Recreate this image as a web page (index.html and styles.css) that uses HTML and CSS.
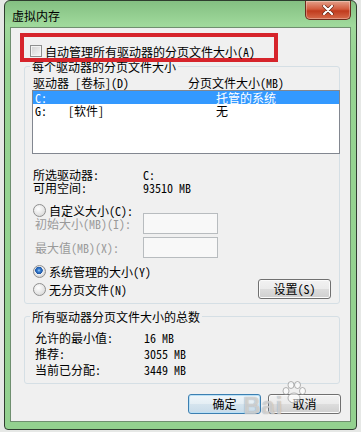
FILE: index.html
```html
<!DOCTYPE html>
<html lang="zh-CN">
  <head>
    <meta charset="UTF-8" />
    <meta name="viewport" content="width=device-width, initial-scale=1.0"/>
    <title>虚拟内存</title>
    <link rel="stylesheet" href="styles.css">
  </head>
  <body>
    <div class="window">
      <div class="titlebar">
        <span class="title">虚拟内存</span>
        <div class="close">
          <svg width="12" height="10" viewBox="0 0 12 10">
            <path d="M2 1 L10 9 M10 1 L2 9" stroke="#5a2416" stroke-width="3.4" stroke-linecap="round"/>
            <path d="M2 1 L10 9 M10 1 L2 9" stroke="#ffffff" stroke-width="2.2" stroke-linecap="round"/>
          </svg>
        </div>
      </div>

      <div class="client">
        <div class="auto-box">
          <span class="check"></span>
          <span>自动管理所有驱动器的分页文件大小(A)</span>
        </div>

        <div class="group">
          <div class="group-title">每个驱动器的分页文件大小</div>
          <div class="cols">
            <span>驱动器 [卷标](D)</span>
            <span>分页文件大小(MB)</span>
          </div>
          <div class="list">
            <div class="list-row selected"><span>C:</span><span></span><span>托管的系统</span></div>
            <div class="list-row"><span>G:</span><span>[软件]</span><span>无</span></div>
          </div>

          <div class="info first"><span>所选驱动器:</span><span>C:</span></div>
          <div class="info"><span>可用空间:</span><span>93510 MB</span></div>

          <div class="opt custom"><span class="radio"></span><span>自定义大小(C):</span></div>
          <div class="field first"><span class="field-label">初始大小(MB)(I):</span><span class="input"></span></div>
          <div class="field"><span class="field-label">最大值(MB)(X):</span><span class="input"></span></div>

          <div class="opt system"><span class="radio on"></span><span>系统管理的大小(Y)</span></div>
          <div class="opt none"><span class="radio"></span><span>无分页文件(N)</span><button type="button" class="btn set">设置(S)</button></div>
        </div>

        <div class="group totals">
          <div class="group-title">所有驱动器分页文件大小的总数</div>
          <div class="sum-row first"><span>允许的最小值:</span><span>16 MB</span></div>
          <div class="sum-row"><span>推荐:</span><span>3055 MB</span></div>
          <div class="sum-row"><span>当前已分配:</span><span>3449 MB</span></div>
        </div>

        <div class="actions">
          <button type="button" class="btn default">确定</button>
          <button type="button" class="btn">取消</button>
        </div>
      </div>

      <span class="watermark">Bai</span>
      <svg class="paw" width="26" height="24" viewBox="0 0 26 24">
        <g fill="rgba(255,255,255,0.6)" stroke="rgba(120,120,120,0.55)" stroke-width="1">
          <ellipse cx="5" cy="10" rx="3" ry="3.5"/>
          <ellipse cx="10" cy="4" rx="3" ry="3.5"/>
          <ellipse cx="16.5" cy="4" rx="3" ry="3.5"/>
          <ellipse cx="21.5" cy="10" rx="3" ry="3.5"/>
          <ellipse cx="13" cy="17" rx="6" ry="5"/>
        </g>
      </svg>
    </div>
  </body>
</html>
```

FILE: styles.css
```css
* {
  box-sizing: border-box;
}

body {
  margin: 0;
  background: #e6e8e6;
  font-family: "Noto Sans Mono CJK SC", "Noto Sans CJK SC", sans-serif;
  font-size: 12px;
  line-height: 13px;
  color: #000;
}

.window {
  position: relative;
  width: 353px;
  height: 430px;
  margin-left: 4px;
  padding: 0 5px 7px;
  border: 1px solid #2f3d2f;
  border-radius: 6px 6px 4px 4px;
  background: linear-gradient(#84bf82, #9fd99b 24px, #96d492 60px, #93d18f);
}

.titlebar {
  display: flex;
  align-items: flex-start;
  height: 26px;
}

.title {
  padding: 8px 0 0 2px;
}

.close {
  display: flex;
  align-items: center;
  justify-content: center;
  width: 46px;
  height: 19px;
  margin-left: auto;
  border: 1px solid #6b2a1c;
  border-top: none;
  border-radius: 0 0 5px 5px;
  background: linear-gradient(#e3a08a, #d25c3e 45%, #c03b1e 55%, #d66a4a);
  box-shadow: inset 0 0 0 1px rgba(255, 255, 255, 0.3);
}

.client {
  height: 395px;
  border: 1px solid #6f8f6f;
  background: #f0f0f0;
}

.auto-box {
  position: relative;
  z-index: 1;
  display: flex;
  align-items: center;
  gap: 3px;
  width: 258px;
  height: 29px;
  margin: 5px 0 0 9px;
  padding: 7px 0 0 6px;
  border: 4px solid #d6242b;
}

.check {
  flex: none;
  width: 12px;
  height: 12px;
  border: 1px solid #8e8f8f;
  background: linear-gradient(135deg, #d2d2d2, #f7f7f7);
  box-shadow: inset 0 0 0 1px #f4f4f4;
}

.group {
  width: 316px;
  margin: 4px 0 0 13px;
  padding: 0 8px 4px;
  border: 1px solid #d5dfe5;
  border-radius: 3px;
}

.group-title {
  width: fit-content;
  margin: -7px 0 0 -3px;
  padding: 0 2px;
  background: #f0f0f0;
}

.cols {
  display: grid;
  grid-template-columns: 155px 1fr;
  margin-top: 3px;
}

.list {
  height: 64px;
  margin: 1px -9px 0 -1px;
  border: 1px solid #828790;
  background: #fff;
}

.list-row {
  display: grid;
  grid-template-columns: 33px 148px 1fr;
  height: 13px;
  padding-left: 2px;
}

.list-row.selected {
  background: #3399ff;
  color: #fff;
}

.info {
  display: grid;
  grid-template-columns: 110px 1fr;
}

.info.first {
  margin-top: 14px;
}

.opt {
  display: flex;
  align-items: center;
  gap: 3px;
  height: 14px;
}

.opt.custom {
  margin-top: 9px;
}

.opt.system {
  margin-top: 6px;
}

.opt.none {
  height: 20px;
  margin-top: 1px;
}

.radio {
  flex: none;
  width: 13px;
  height: 13px;
  border: 1px solid #8f8f8f;
  border-radius: 50%;
  background: radial-gradient(circle at 40% 35%, #fff, #d8d8d8 85%);
}

.radio.on {
  background: radial-gradient(circle at 45% 40%, #a8d4f6 0, #3a7fd0 1.5px, #1d56a6 3.5px, #f2f2f2 4px, #d8d8d8 6px);
}

.field {
  display: flex;
  align-items: center;
  height: 21px;
  margin-top: 3px;
  padding-left: 2px;
  color: #9a9a9a;
}

.field.first {
  margin-top: -4px;
}

.field-label {
  width: 108px;
}

.input {
  width: 75px;
  height: 21px;
  border: 1px solid #b8bcbf;
  background: #f8f8f8;
}

.btn {
  width: 73px;
  height: 20px;
  padding: 0;
  border: 1px solid #707070;
  border-radius: 3px;
  background: linear-gradient(#f2f2f2, #ebebeb 49%, #dddddd 50%, #cfcfcf);
  box-shadow: inset 0 0 0 1px #fbfbfb;
  font: inherit;
  line-height: 18px;
  color: #000;
}

.btn.set {
  margin-left: auto;
}

.btn.default {
  border-color: #3c7fb1;
  background: linear-gradient(#f0f6fa, #e4eef4 49%, #d5e4ee 50%, #c8dbe9);
  box-shadow: inset 0 0 0 1px #b9e0f6;
}

.totals {
  margin-top: 12px;
  padding-bottom: 6px;
}

.sum-row {
  display: grid;
  grid-template-columns: 109px 1fr;
  height: 16px;
  padding-left: 2px;
  align-items: center;
}

.sum-row.first {
  margin-top: 6px;
}

.actions {
  display: flex;
  justify-content: flex-end;
  gap: 7px;
  margin-top: 10px;
  padding-right: 9px;
}

.watermark {
  position: absolute;
  left: 238px;
  top: 392px;
  font-family: "Liberation Sans", sans-serif;
  font-size: 24px;
  font-weight: bold;
  line-height: 26px;
  letter-spacing: 1px;
  color: rgba(255, 255, 255, 0.55);
  text-shadow: 0 0 1px rgba(110, 110, 110, 0.7);
}

.paw {
  position: absolute;
  left: 276px;
  top: 380px;
}
```
